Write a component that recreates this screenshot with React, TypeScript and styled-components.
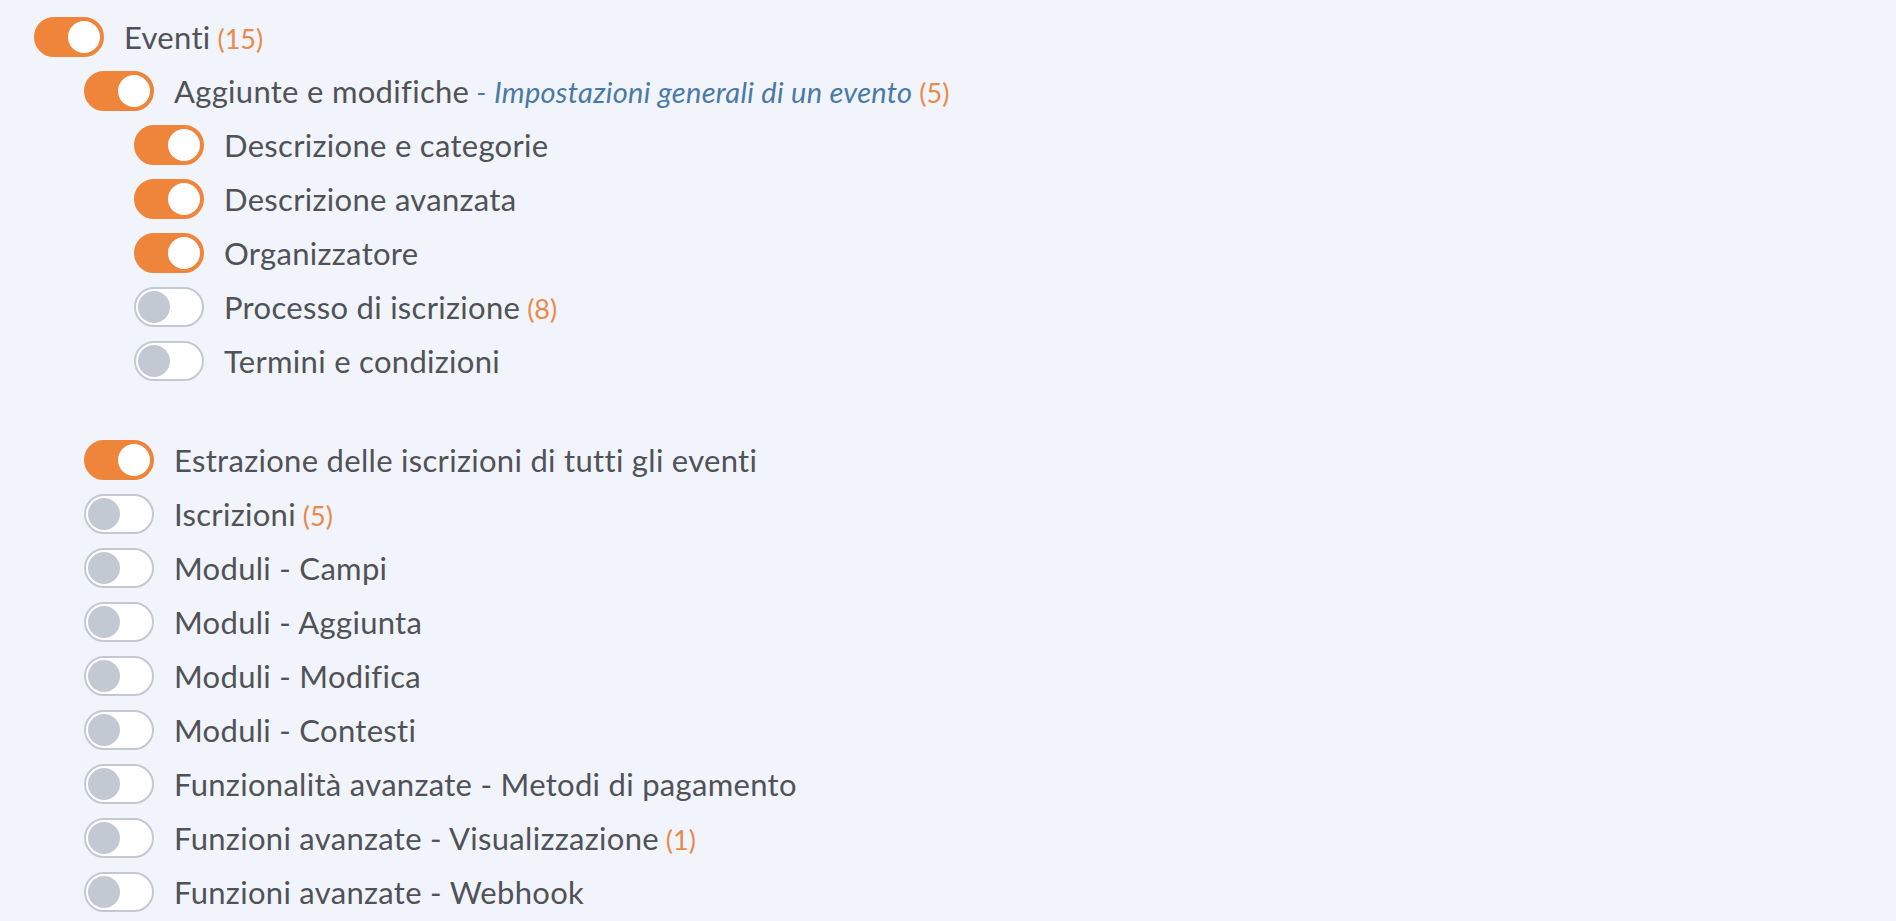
import React, { useState } from "react";
import styled, { createGlobalStyle } from "styled-components";

const GlobalStyle = createGlobalStyle`
  html, body {
    margin: 0;
    padding: 0;
    background: #f1f4fb;
  }
  body {
    font-family: "Lato", "Noto Sans", sans-serif;
    color: #505257;
  }
`;

type Perm = {
  id: string;
  label: string;
  note?: string;
  count?: number;
  on?: boolean;
  children?: Perm[];
  spaced?: boolean;
};

const tree: Perm = {
  id: "eventi",
  label: "Eventi",
  count: 15,
  on: true,
  children: [
    {
      id: "aggiunte",
      label: "Aggiunte e modifiche",
      note: "Impostazioni generali di un evento",
      count: 5,
      on: true,
      spaced: true,
      children: [
        { id: "descr", label: "Descrizione e categorie", on: true },
        { id: "descr-av", label: "Descrizione avanzata", on: true },
        { id: "org", label: "Organizzatore", on: true },
        { id: "proc", label: "Processo di iscrizione", count: 8 },
        { id: "term", label: "Termini e condizioni" },
      ],
    },
    { id: "estr", label: "Estrazione delle iscrizioni di tutti gli eventi", on: true },
    { id: "iscr", label: "Iscrizioni", count: 5 },
    { id: "mod-campi", label: "Moduli - Campi" },
    { id: "mod-agg", label: "Moduli - Aggiunta" },
    { id: "mod-mod", label: "Moduli - Modifica" },
    { id: "mod-cont", label: "Moduli - Contesti" },
    { id: "fz-pag", label: "Funzionalità avanzate - Metodi di pagamento" },
    { id: "fz-vis", label: "Funzioni avanzate - Visualizzazione", count: 1 },
    { id: "fz-hook", label: "Funzioni avanzate - Webhook" },
  ],
};

const Page = styled.div`
  padding: 10px 0 0 34px;
`;

const Group = styled.ul<{ $indent: number; $spaced?: boolean }>`
  list-style: none;
  margin: 0 0 ${(p) => (p.$spaced ? "45px" : "0")} 0;
  padding: 0 0 0 ${(p) => p.$indent}px;
`;

const Row = styled.label`
  display: flex;
  align-items: center;
  gap: 20px;
  height: 54px;
  cursor: pointer;
  user-select: none;
`;

const Track = styled.span<{ $on: boolean }>`
  position: relative;
  flex: none;
  box-sizing: border-box;
  width: 70px;
  height: 40px;
  border-radius: 20px;
  border: 2px solid ${(p) => (p.$on ? "#ef853b" : "#c3c9d3")};
  background: ${(p) => (p.$on ? "#ef853b" : "#ffffff")};
`;

const Knob = styled.span<{ $on: boolean }>`
  position: absolute;
  top: 2px;
  left: ${(p) => (p.$on ? "32px" : "2px")};
  width: 32px;
  height: 32px;
  border-radius: 50%;
  background: ${(p) => (p.$on ? "#ffffff" : "#c3c9d3")};
`;

const Label = styled.span`
  font-size: 31px;
  letter-spacing: 0.3px;
  color: #505257;
  white-space: nowrap;
`;

const Note = styled.span`
  font-size: 29px;
  letter-spacing: 0.3px;
  font-style: italic;
  color: #4b79a6;
`;

const Count = styled.span`
  font-size: 27px;
  letter-spacing: 0;
  color: #e98a4a;
`;

const Toggle = ({ on, onClick }: { on: boolean; onClick: () => void }) => (
  <Track $on={on} role="switch" aria-checked={on} onClick={onClick}>
    <Knob $on={on} />
  </Track>
);

const Item = ({ perm, state, flip }: { perm: Perm; state: Record<string, boolean>; flip: (id: string) => void }) => (
  <li>
    <Row>
      <Toggle on={state[perm.id]} onClick={() => flip(perm.id)} />
      <Label>
        {perm.label}
        {perm.note && <Note> - {perm.note}</Note>}
        {perm.count !== undefined && <Count> ({perm.count})</Count>}
      </Label>
    </Row>
    {perm.children && (
      <Group $indent={50} $spaced={perm.spaced}>
        {perm.children.map((c) => (
          <Item key={c.id} perm={c} state={state} flip={flip} />
        ))}
      </Group>
    )}
  </li>
);

const collect = (p: Perm, acc: Record<string, boolean> = {}) => {
  acc[p.id] = !!p.on;
  p.children?.forEach((c) => collect(c, acc));
  return acc;
};

export default function App() {
  const [state, setState] = useState<Record<string, boolean>>(() => collect(tree));
  const flip = (id: string) => setState((s) => ({ ...s, [id]: !s[id] }));

  return (
    <Page>
      <GlobalStyle />
      <Group $indent={0}>
        <Item perm={tree} state={state} flip={flip} />
      </Group>
    </Page>
  );
}
